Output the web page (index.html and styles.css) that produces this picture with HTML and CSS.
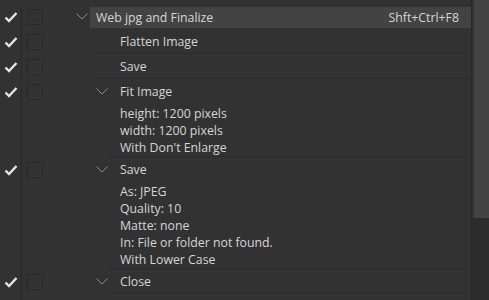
FILE: index.html
```html
<!DOCTYPE html>
<html>
  <head>
    <meta name="viewport" content="width=device-width,initial-scale=1.0">
    <title>Actions</title>
    <link rel="stylesheet" href="styles.css">
  </head>
  <body>
    <div class="panel">
      <div class="list">
        <div class="row set">
          <div class="check"><svg viewBox="0 0 14 12"><path d="M1.5 6.5 L5 10 L12.5 2"/></svg></div>
          <div class="dlg"><span class="box"></span></div>
          <div class="item">
            <svg class="chev" viewBox="0 0 12 7"><path d="M0.5 0.5 L6 6 L11.5 0.5"/></svg>
            <div class="head">
              <span class="name">Web jpg and Finalize</span>
              <span class="key">Shft+Ctrl+F8</span>
            </div>
          </div>
        </div>

        <div class="row">
          <div class="check"><svg viewBox="0 0 14 12"><path d="M1.5 6.5 L5 10 L12.5 2"/></svg></div>
          <div class="dlg"><span class="box"></span></div>
          <div class="item step">
            <div class="body"><div class="name">Flatten Image</div></div>
          </div>
        </div>

        <div class="row">
          <div class="check"><svg viewBox="0 0 14 12"><path d="M1.5 6.5 L5 10 L12.5 2"/></svg></div>
          <div class="dlg"><span class="box"></span></div>
          <div class="item step">
            <div class="body"><div class="name">Save</div></div>
          </div>
        </div>

        <div class="row">
          <div class="check"><svg viewBox="0 0 14 12"><path d="M1.5 6.5 L5 10 L12.5 2"/></svg></div>
          <div class="dlg"><span class="box"></span></div>
          <div class="item step open">
            <svg class="chev" viewBox="0 0 12 7"><path d="M0.5 0.5 L6 6 L11.5 0.5"/></svg>
            <div class="body">
              <div class="name">Fit Image</div>
              <ul class="params">
                <li>height: 1200 pixels</li>
                <li>width: 1200 pixels</li>
                <li>With Don't Enlarge</li>
              </ul>
            </div>
          </div>
        </div>

        <div class="row">
          <div class="check"><svg viewBox="0 0 14 12"><path d="M1.5 6.5 L5 10 L12.5 2"/></svg></div>
          <div class="dlg"><span class="box"></span></div>
          <div class="item step open">
            <svg class="chev" viewBox="0 0 12 7"><path d="M0.5 0.5 L6 6 L11.5 0.5"/></svg>
            <div class="body">
              <div class="name">Save</div>
              <ul class="params">
                <li>As: JPEG</li>
                <li>Quality: 10</li>
                <li>Matte: none</li>
                <li>In: File or folder not found.</li>
                <li>With Lower Case</li>
              </ul>
            </div>
          </div>
        </div>

        <div class="row">
          <div class="check"><svg viewBox="0 0 14 12"><path d="M1.5 6.5 L5 10 L12.5 2"/></svg></div>
          <div class="dlg"><span class="box"></span></div>
          <div class="item step open">
            <svg class="chev" viewBox="0 0 12 7"><path d="M0.5 0.5 L6 6 L11.5 0.5"/></svg>
            <div class="body"><div class="name">Close</div></div>
          </div>
        </div>
        <div class="rest"></div>
      </div>
      <div class="scroll"><div class="thumb"></div></div>
    </div>
  </body>
</html>
```

FILE: styles.css
```css
body {
  margin: 0;
  background: #323232;
  color: #d6d6d6;
  font-family: "Open Sans", "Noto Sans", sans-serif;
  font-size: 12.3px;
  overflow: hidden;
}
.panel {
  display: flex;
  height: 300px;
}
.list {
  flex: 1;
  display: flex;
  flex-direction: column;
  padding-top: 4px;
}
.row {
  display: flex;
}
.rest {
  flex: 1;
  width: 22px;
  border-right: 1px solid #2a2a2a;
  box-sizing: border-box;
}
.check {
  width: 22px;
  border-right: 1px solid #2a2a2a;
  padding: 7px 0 0 4px;
  box-sizing: border-box;
}
.check svg {
  display: block;
  width: 14px;
  height: 12px;
  fill: none;
  stroke: #e4e4e4;
  stroke-width: 2.4;
}
.dlg {
  width: 30px;
  height: 25px;
  display: flex;
  align-items: center;
  padding-left: 5px;
  box-sizing: border-box;
}
.box {
  width: 16px;
  height: 16px;
  box-sizing: border-box;
  border: 1px solid #282828;
  box-shadow: inset -1px -1px 0 #363636;
}
.item {
  flex: 1;
  display: flex;
  padding-left: 24px;
}
.chev {
  width: 12px;
  height: 7px;
  fill: none;
  stroke: #8c8c8c;
  stroke-width: 1;
  margin-top: 9px;
  flex-shrink: 0;
}
.head {
  flex: 1;
  display: flex;
  justify-content: space-between;
  align-items: center;
  margin: 3px 0 1px 2px;
  height: 21px;
  padding: 0 12px 0 6px;
  background: #434343;
}
.head .name {
  line-height: 21px;
  padding-top: 0;
}
.step {
  padding-left: 44px;
}
.step .body {
  flex: 1;
  padding-left: 24px;
  border-bottom: 1px solid #2c2c2c;
}
.step.open .body {
  padding-left: 12px;
}
.name {
  padding-top: 1px;
  line-height: 23px;
}
.params {
  list-style: none;
  margin: 0;
  padding: 2px 0 0;
}
.params li {
  line-height: 17px;
}
.scroll {
  width: 17px;
  border-left: 1px solid #282828;
  background: #2b2b2b;
}
.thumb {
  height: 218px;
  border-left: 2px solid #323232;
  background: #434343;
}
```
